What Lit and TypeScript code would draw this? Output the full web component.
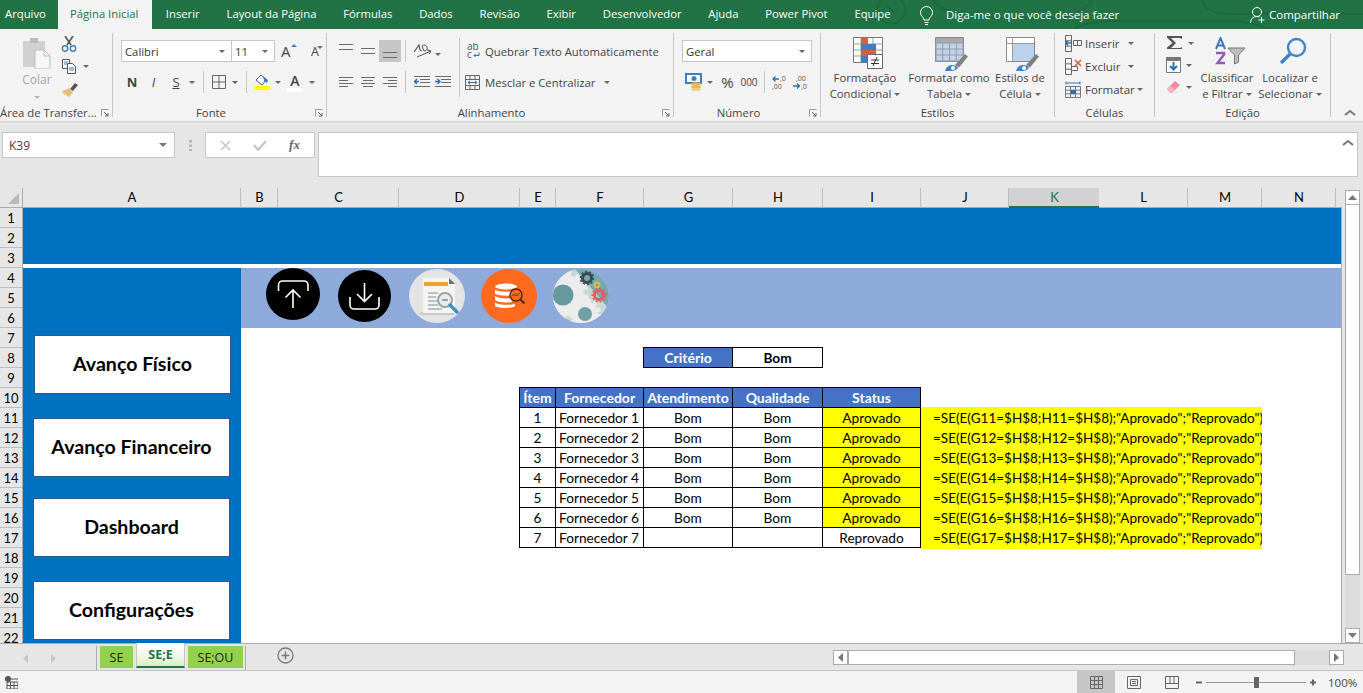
import { LitElement, html, svg, css } from "lit";
import { customElement } from "lit/decorators.js";

const UI_FONT = css`"Open Sans", "Noto Sans", sans-serif`;
const CELL_FONT = css`Lato, "Open Sans", sans-serif`;

// ------ helper for inline icons ------ //
const ico = (w: number, h: number, body: unknown) => html`<svg
  width=${w}
  height=${h}
  viewBox="0 0 ${w} ${h}"
  fill="none"
  style="display:block"
>${body}</svg>`;

const caret = html`<span class="caret"></span>`;
const launcher = html`<span class="launcher">${ico(8, 8, svg`
  <path d="M0.5 7.5V0.5H7.5" stroke="#9a9a9a"/><path d="M3 3L7 7M7 4V7H4" stroke="#666"/>`)}</span>`;

const lines = (rows: number[][], color = "#6a6a6a") =>
  rows.map(([x1, y, x2]) => svg`<path d="M${x1} ${y}.5H${x2}" stroke=${color}/>`);

const gridPath = (x: number, y: number, w: number, h: number, cols: number, rows: number, color: string) => {
  let d = "";
  for (let i = 0; i <= cols; i++) d += `M${x + (i * w) / cols} ${y}V${y + h}`;
  for (let i = 0; i <= rows; i++) d += `M${x} ${y + (i * h) / rows}H${x + w}`;
  return svg`<path d=${d} stroke=${color}/>`;
};

const brush = svg`
  <path d="M20 28l10-11 3 2.500-9 11z" fill="#808080"/>
  <path d="M10 34c1-4 4-6 7-6 3 0 5 1 6 3-3 3-8 4-13 3z" fill="#3c83c8"/>
  <circle cx="18" cy="31" r="2" fill="#fff"/>`;

const ICONS = {
  paste: ico(30, 32, svg`
    <path d="M1 4h22v26H1z" fill="#d3d0d0"/><path d="M8 1h8v5H8z" fill="#bdbaba"/>
    <path d="M13 13h9l6 6v13H13z" fill="#f7f7f7" stroke="#bdbdbd"/><path d="M22 13v6h6" stroke="#bdbdbd"/>`),
  cut: ico(16, 16, svg`
    <path d="M4 0l6 9M12 0L6 9" stroke="#555" stroke-width="1.600"/>
    <circle cx="4" cy="12.500" r="2.700" stroke="#3c7fc0" stroke-width="1.400"/>
    <circle cx="12" cy="12.500" r="2.700" stroke="#3c7fc0" stroke-width="1.400"/>`),
  copy: ico(16, 15, svg`
    <path d="M1.500.5h7v9h-7z" fill="#fff" stroke="#555"/><path d="M6.500 4.500h5l3 3v7h-8z" fill="#fff" stroke="#555"/>
    <path d="M3 3h4M3 5h3M8 9h5M8 11h5" stroke="#3c7fc0"/>`),
  painter: ico(17, 15, svg`
    <path d="M9 7l5-6 3 2-5 6z" fill="#555"/><path d="M1 9l8-3 3 4-4 5-2-1-1-2-2 1z" fill="#e7bd7f"/>`),
  borders: ico(14, 14, svg`<path d="M.5.5h13v13H.5zM7 .5v13M.5 7h13" stroke="#666"/>`),
  fill: ico(16, 13, svg`
    <path d="M2 6l5-5 5 5-4 5z" fill="#fff" stroke="#555"/><path d="M9 2l5 4-1 3-3-2z" fill="#3c7fc0"/>`),
  alignT: ico(14, 16, lines([[0, 1, 14], [0, 6, 14]])),
  alignM: ico(14, 16, lines([[0, 5, 14], [0, 10, 14]])),
  alignB: ico(14, 16, lines([[0, 9, 14], [0, 14, 14]])),
  left: ico(14, 11, lines([[0, 0, 14], [0, 3, 9], [0, 6, 14], [0, 9, 9]])),
  center: ico(14, 11, lines([[0, 0, 14], [2, 3, 12], [0, 6, 14], [2, 9, 12]])),
  right: ico(14, 11, lines([[0, 0, 14], [5, 3, 14], [0, 6, 14], [5, 9, 14]])),
  orient: ico(19, 16, svg`
    <path d="M1 9l5-7 1 5 1.500 1" stroke="#555" stroke-width="1.200"/><path d="M9 3a3 3 0 1 1 2 5z" stroke="#555"/>
    <path d="M4 14l14-6M14 7l4 1-2 3" stroke="#555"/>`),
  indentL: ico(16, 12, svg`${lines([[6, 3, 16], [6, 6, 16], [0, 0, 16], [0, 10, 16]])}
    <path d="M5 5.500H1M3 3L.5 5.500 3 8" stroke="#2b6fb5" stroke-width="1.400"/>`),
  indentR: ico(16, 12, svg`${lines([[6, 3, 16], [6, 6, 16], [0, 0, 16], [0, 10, 16]])}
    <path d="M0 5.500h4M2.500 3L5 5.500 2.500 8" stroke="#2b6fb5" stroke-width="1.400"/>`),
  merge: ico(15, 15, svg`
    <path d="M.5.5h14v14H.5zM.5 4.500h14M.5 10.500h14M5 .5v4M10 .5v4M5 10.500v4M10 10.500v4" stroke="#666"/>
    <path d="M3 7.500h9M5 5.800L3 7.500l2 1.700M10 5.800l2 1.700-2 1.700" stroke="#2b6fb5"/>`),
  wrapText: ico(16, 16, svg`
    <text x="2" y="7" font-size="10" fill="#555" font-family="Open Sans">ab</text>
    <text x="2" y="15" font-size="10" fill="#555" font-family="Open Sans">c</text>
    <path d="M14 9.500v3H9M10.500 11L9 12.500l1.500 1.500" stroke="#2b6fb5"/>`),
  money: ico(18, 18, svg`
    <path d="M1 1h15v9H1z" fill="#fff" stroke="#3c7fc0" stroke-width="2"/><circle cx="9" cy="5.500" r="2.500" fill="#3c7fc0"/>
    <ellipse cx="11" cy="11" rx="5" ry="1.800" fill="#e8b94a"/><ellipse cx="11" cy="14" rx="5" ry="1.800" fill="#e8b94a"/>
    <ellipse cx="11" cy="16.500" rx="5" ry="1.500" fill="#efcf88"/>`),
  incDec: ico(15, 15, svg`
    <path d="M7 4H1M3.500 1.500L1 4l2.500 2.500" stroke="#2b6fb5" stroke-width="1.300"/>
    <text x="8" y="6" font-size="7" fill="#555" font-family="Open Sans">,0</text>
    <text x="0" y="14" font-size="7" fill="#555" font-family="Open Sans">,00</text>`),
  decInc: ico(16, 15, svg`
    <text x="4" y="6" font-size="7" fill="#555" font-family="Open Sans">,00</text>
    <path d="M1 11h6M5 8.500L7.500 11 5 13.500" stroke="#2b6fb5" stroke-width="1.300"/>
    <text x="9" y="14" font-size="7" fill="#555" font-family="Open Sans">,0</text>`),
  condFmt: ico(30, 32, svg`
    <path d="M.5.5h29v25H.5z" fill="#fff" stroke="#777"/>
    <path d="M8 7h4v19M.5 7h29M.5 13h29M.5 19h29M8 .5v25M20 .5v25" stroke="#9a9a9a"/>
    <path d="M8 1h7v6H8zM8 13h15v6H8z" fill="#d9603b"/><path d="M8 7h15v6H8z" fill="#3f7fc1"/><path d="M8 19h6v7H8z" fill="#3f7fc1"/>
    <path d="M14.500 17.500h15v14h-15z" fill="#fff" stroke="#666"/>
    <path d="M18 23h8M18 26.500h8M24 20l-4 9" stroke="#333"/>`),
  tableFmt: ico(34, 34, svg`
    <path d="M.5.5h28v24H.5z" fill="#fff" stroke="#888"/><path d="M1 1h27v5H1z" fill="#a9a9a9"/>
    <path d="M1 6h27v18H1z" fill="#c3d1e6"/>${gridPath(1, 6, 27, 18, 4, 3, "#8f9cae")}${brush}`),
  cellFmt: ico(34, 34, svg`
    <path d="M.5.5h28v24H.5z" fill="#fff" stroke="#888"/>
    <path d="M6 6h22v18H6z" fill="#bcd2ea"/><path d="M.5 6.500h28M6.500 .5v24" stroke="#999"/>${brush}`),
  insert: ico(17, 17, svg`
    ${gridPath(.5, .5, 6, 16, 1, 3, "#666")}${gridPath(8.500, 5.500, 8, 5, 2, 1, "#666")}
    <path d="M7 8H1M3 5.500L.5 8 3 10.500" stroke="#2b6fb5" stroke-width="1.400"/>`),
  del: ico(17, 17, svg`
    ${gridPath(.5, .5, 6, 16, 1, 3, "#666")}${gridPath(6.500, 8.500, 6, 4, 1, 1, "#666")}
    <path d="M10 2l6 6M16 2l-6 6" stroke="#d9603b" stroke-width="1.600"/>`),
  format: ico(17, 17, svg`
    <path d="M1 2h14M1 .5v3M15 .5v3" stroke="#2b6fb5"/>
    ${gridPath(.5, 5.500, 15, 11, 3, 3, "#777")}<path d="M6 9h5v4H6z" fill="#2b6fb5"/>`),
  sigma: ico(17, 14, svg`<path d="M1 0h15v3l-2-1H5l5 5-5 5h9l2-1v2H1v-1.500L6.500 7 1 1.500z" fill="#555"/>`),
  fillDown: ico(15, 16, svg`
    <path d="M.5.5h14v15H.5z" fill="#fff" stroke="#777"/><path d="M1 1h13v3H1z" fill="#777"/>
    <path d="M7.500 5v7M4 9l3.500 3.500L11 9" stroke="#2b6fb5" stroke-width="2"/>`),
  eraser: ico(15, 14, svg`<path d="M1 9l8-8 5 4-8 8H4z" fill="#ef8b9d"/><path d="M1 9l3 4h2l3-3-4-4z" fill="#f4b7c2"/>`),
  sort: html`<svg width="32" height="30" viewBox="0 0 32 30" style="display:block">
    <path d="M14 11h17l-6.500 7v7l-4 2v-9z" fill="#bdbdbd" stroke="#777"/>
    <path d="M2 12L6.500 1 11 12M4 8.500h5" fill="none" stroke="#4078b8" stroke-width="2"/>
    <path d="M2 16h8v1.500L3.500 26H11" fill="none" stroke="#8e5cb8" stroke-width="2.400"/></svg>`,
  find: html`<svg width="28" height="28" viewBox="0 0 28 28" style="display:block">
    <circle cx="17.500" cy="10.500" r="8.500" fill="none" stroke="#3f83c7" stroke-width="2.400"/>
    <path d="M11 17L2 26" stroke="#3f83c7" stroke-width="3.400"/></svg>`,
};

@customElement("ribbon-bar")
export class RibbonBar extends LitElement {
  static styles = css`
    :host {
      display: block;
      font-family: ${UI_FONT};
      font-size: 11.3px;
      color: #444;
    }
    .title {
      height: 29px;
      background: #217346;
      display: flex;
      color: #fff;
      position: relative;
      overflow: hidden;
    }
    .deco {
      position: absolute;
      right: 0;
      top: 0;
    }
    .tab {
      padding: 0 13.4px;
      line-height: 28px;
      white-space: nowrap;
      position: relative;
    }
    .tab.file {
      padding: 0 12px 0 5px;
    }
    .tab.active {
      background: #f3f3f3;
      color: #217346;
      padding: 0 14px 0 12px;
    }
    .tell {
      position: absolute;
      left: 919px;
      top: 0;
      height: 29px;
      display: flex;
      align-items: center;
      gap: 12px;
      font-size: 11.5px;
    }
    .share {
      position: absolute;
      left: 1250px;
      top: 0;
      height: 29px;
      display: flex;
      align-items: center;
      gap: 4px;
      font-size: 11.5px;
    }
    .ribbon {
      height: 93px;
      box-sizing: border-box;
      background: #f3f3f3;
      border-bottom: 1px solid #d2d2d2;
      padding-top: 4px;
      display: flex;
      position: relative;
    }
    .group {
      height: 84px;
      flex: none;
      box-sizing: border-box;
      border-right: 1px solid #c6c6c6;
      position: relative;
    }
    .g-clip { width: 113px; }
    .g-font { width: 214px; }
    .g-align { width: 347px; }
    .g-num { width: 147px; }
    .g-style { width: 234px; }
    .g-cells { width: 100px; }
    .g-edit { width: 176px; }
    .body {
      height: 72px;
      display: flex;
    }
    .label {
      position: absolute;
      left: 0;
      right: 0;
      top: 72px;
      line-height: 16px;
      text-align: center;
      white-space: nowrap;
    }
    .label.pad {
      padding-right: 17px;
    }
    .label.clip {
      padding-right: 20px;
    }
    .launcher {
      position: absolute;
      right: 3px;
      top: 76px;
    }
    .caret {
      display: inline-block;
      flex: none;
      width: 0;
      height: 0;
      border-left: 3px solid transparent;
      border-right: 3px solid transparent;
      border-top: 3px solid #666;
    }
    .sep {
      width: 1px;
      height: 22px;
      background: #c6c6c6;
    }
    .paste {
      width: 48px;
      margin-left: 13px;
      padding-top: 4px;
      display: flex;
      flex-direction: column;
      align-items: center;
      color: #a6a6a6;
    }
    .paste span.txt {
      margin-top: 2px;
      line-height: 18px;
      font-size: 12px;
    }
    .paste .caret {
      margin-top: 7px;
      border-top-color: #b5b5b5;
    }
    .smalls {
      margin-top: -1px;
      display: grid;
      grid-auto-rows: 23px;
      align-items: center;
    }
    .smalls .caret {
      margin-left: 6px;
    }
    .line {
      display: flex;
      align-items: center;
    }
    .fontcol {
      margin-left: 8px;
      padding-top: 7px;
    }
    .select {
      box-sizing: border-box;
      height: 22px;
      background: #fff;
      border: 1px solid #c6c6c6;
      display: flex;
      align-items: center;
      justify-content: space-between;
      padding: 0 6px 0 3px;
      color: #333;
      font-size: 11.3px;
    }
    .s-font { width: 111px; }
    .s-size { width: 44px; margin-left: -1px; }
    .s-num { width: 130px; }
    .grow {
      margin-left: 6px;
      width: 24px;
      font-size: 15px;
      position: relative;
    }
    .shrink {
      font-size: 12.5px;
    }
    .grow i {
      position: absolute;
      top: 3px;
      right: 8px;
      width: 0;
      height: 0;
      border-left: 3px solid transparent;
      border-right: 3px solid transparent;
      border-bottom: 3px solid #3c7fc0;
    }
    .grow.shrink i {
      border-bottom: 0;
      border-top: 3px solid #3c7fc0;
      right: 12px;
    }
    .tools {
      display: grid;
      align-items: center;
      justify-items: center;
      height: 22px;
    }
    .t-font {
      margin-top: 9px;
      grid-template-columns: 22px 21px 24px 8px 14px 18px 14px 8px 24px 8px 26px 8px;
      font-size: 13px;
    }
    .t-font b { font-family: ${UI_FONT}; }
    .und {
      text-decoration: underline;
    }
    .swatch {
      display: flex;
      flex-direction: column;
      align-items: center;
    }
    .bar {
      width: 16px;
      height: 4px;
      margin-top: -1px;
      background: #ffff00;
    }
    .bar.white { background: #fff; margin-top: 0; }
    .letter {
      font-size: 14px;
      line-height: 15px;
      font-weight: 600;
    }
    .aligns {
      margin-left: 8px;
      padding-top: 7px;
      width: 124px;
      display: grid;
      grid-template-columns: 22px 22px 22px 8px 26px 16px;
      grid-template-rows: 22px 22px;
      row-gap: 9px;
      align-items: center;
      justify-items: center;
    }
    .on {
      background: #c6c6c6;
      width: 22px;
      height: 22px;
      display: flex;
      align-items: center;
      justify-content: center;
    }
    .start {
      justify-self: start;
    }
    .wrapcol {
      margin-top: 5px;
      height: 57px;
      padding-top: 2px;
      border-left: 1px solid #c6c6c6;
      display: grid;
      grid-template-rows: 22px 22px;
      row-gap: 9px;
      align-items: center;
    }
    .wrapline {
      display: flex;
      align-items: center;
      padding-left: 5px;
      font-size: 11.3px;
      white-space: nowrap;
    }
    .wrapline .ic {
      width: 20px;
      flex: none;
    }
    .wrapline .caret {
      margin-left: 9px;
    }
    .numcol {
      margin-left: 8px;
      padding-top: 7px;
    }
    .t-num {
      margin-top: 9px;
      grid-template-columns: 23px 10px 25px 18px 12px 18px 24px;
    }
    .pct {
      font-size: 15px;
    }
    .mil {
      font-size: 10px;
    }
    .big {
      padding-top: 4px;
      display: flex;
      flex-direction: column;
      align-items: center;
      text-align: center;
      flex: none;
      line-height: 16px;
      white-space: nowrap;
    }
    .big .pic {
      height: 30px;
      margin-bottom: 3px;
      margin-left: 5px;
    }
    .big .caret {
      margin-left: 3px;
      vertical-align: 2px;
    }
    .c1 { width: 78px; margin-left: 5px; }
    .c2 { width: 90px; }
    .c3 { width: 52px; }
    .c4 { width: 60px; }
    .c5 { width: 66px; }
    .celllist {
      margin: -1px 0 0 10px;
      display: grid;
      grid-auto-rows: 23px;
      align-items: center;
    }
    .celllist .name {
      min-width: 41px;
      margin: 0 2px 0 3px;
      font-size: 11.5px;
    }
    .editsmall {
      width: 31px;
      margin: -1px 0 0 11px;
      display: grid;
      grid-auto-rows: 22px;
      align-items: center;
    }
    .editsmall .caret {
      margin-left: 5px;
    }
    .collapse {
      position: absolute;
      left: 1344px;
      top: 80px;
    }
  `;

  render() {
    const tabs = ["Inserir", "Layout da Página", "Fórmulas", "Dados", "Revisão", "Exibir", "Desenvolvedor", "Ajuda", "Power Pivot", "Equipe"];
    return html`
      <div class="title">
        <svg class="deco" width="490" height="29" viewBox="0 0 490 29" fill="none" stroke="#1c6a3e" stroke-width="2">
          <circle cx="18" cy="10" r="14"/><path d="M12 4l10 10M60 0c10 12 30 18 60 18h60c20 0 30-8 40-18M200 29c20-10 40-8 70-8h90c20 0 30 8 40 8M330 0c0 10 10 14 30 14h130"/>
        </svg>
        <div class="tab file">Arquivo</div>
        <div class="tab active">Página Inicial</div>
        ${tabs.map((t) => html`<div class="tab">${t}</div>`)}
        <div class="tell">
          ${ico(15, 20, svg`<path d="M4 12.500C2.500 11 1.500 9.500 1.500 7.500a6 6 0 0 1 12 0c0 2-1 3.500-2.500 5-.6.7-1 1.500-1 2.500H5c0-1-.4-1.800-1-2.500zM5.500 17.500h4M6 19.500h3" stroke="#fff"/>`)}
          <span>Diga-me o que você deseja fazer</span>
        </div>
        <div class="share">
          ${ico(15, 18, svg`<circle cx="7" cy="6" r="4.500" stroke="#fff"/><path d="M.5 17c0-4 2.500-6.500 6.500-6.500 1 0 2 .2 2.500.5M11.500 11v6M8.500 14h6" stroke="#fff"/>`)}
          <span>Compartilhar</span>
        </div>
      </div>

      <div class="ribbon">
        <section class="group g-clip">
          <div class="body">
            <div class="paste">${ICONS.paste}<span class="txt">Colar</span>${caret}</div>
            <div class="smalls">
              <div class="line">${ICONS.cut}</div>
              <div class="line">${ICONS.copy}${caret}</div>
              <div class="line">${ICONS.painter}</div>
            </div>
          </div>
          <div class="label clip">Área de Transfer...</div>
          ${launcher}
        </section>

        <section class="group g-font">
          <div class="body">
            <div class="fontcol">
              <div class="line">
                <div class="select s-font">Calibri${caret}</div>
                <div class="select s-size">11${caret}</div>
                <div class="grow">A<i></i></div>
                <div class="grow shrink">A<i></i></div>
              </div>
              <div class="tools t-font">
                <b>N</b><i>I</i><span class="und">S</span>${caret}<span class="sep"></span>
                ${ICONS.borders}${caret}<span class="sep"></span>
                <span class="swatch">${ICONS.fill}<span class="bar"></span></span>${caret}
                <span class="swatch"><span class="letter">A</span><span class="bar white"></span></span>${caret}
              </div>
            </div>
          </div>
          <div class="label pad">Fonte</div>
          ${launcher}
        </section>

        <section class="group g-align">
          <div class="body">
            <div class="aligns">
              ${ICONS.alignT}${ICONS.alignM}<span class="on">${ICONS.alignB}</span><span class="sep"></span>
              ${ICONS.orient}<span class="start">${caret}</span>
              ${ICONS.left}${ICONS.center}${ICONS.right}<span class="sep"></span>${ICONS.indentL}${ICONS.indentR}
            </div>
            <div class="wrapcol">
              <div class="wrapline"><span class="ic">${ICONS.wrapText}</span>Quebrar Texto Automaticamente</div>
              <div class="wrapline"><span class="ic">${ICONS.merge}</span>Mesclar e Centralizar${caret}</div>
            </div>
          </div>
          <div class="label pad">Alinhamento</div>
          ${launcher}
        </section>

        <section class="group g-num">
          <div class="body">
            <div class="numcol">
              <div class="select s-num">Geral${caret}</div>
              <div class="tools t-num">
                ${ICONS.money}${caret}<span class="pct">%</span><span class="mil">000</span><span class="sep"></span>
                ${ICONS.incDec}${ICONS.decInc}
              </div>
            </div>
          </div>
          <div class="label pad">Número</div>
          ${launcher}
        </section>

        <section class="group g-style">
          <div class="body">
            <div class="big c1"><div class="pic">${ICONS.condFmt}</div><div>Formatação<br />Condicional${caret}</div></div>
            <div class="big c2"><div class="pic">${ICONS.tableFmt}</div><div>Formatar como<br />Tabela${caret}</div></div>
            <div class="big c3"><div class="pic">${ICONS.cellFmt}</div><div>Estilos de<br />Célula${caret}</div></div>
          </div>
          <div class="label">Estilos</div>
        </section>

        <section class="group g-cells">
          <div class="body">
            <div class="celllist">
              <div class="line">${ICONS.insert}<span class="name">Inserir</span>${caret}</div>
              <div class="line">${ICONS.del}<span class="name">Excluir</span>${caret}</div>
              <div class="line">${ICONS.format}<span class="name">Formatar</span>${caret}</div>
            </div>
          </div>
          <div class="label">Células</div>
        </section>

        <section class="group g-edit">
          <div class="body">
            <div class="editsmall">
              <div class="line">${ICONS.sigma}${caret}</div>
              <div class="line">${ICONS.fillDown}${caret}</div>
              <div class="line">${ICONS.eraser}${caret}</div>
            </div>
            <div class="big c4"><div class="pic">${ICONS.sort}</div><div>Classificar<br />e Filtrar${caret}</div></div>
            <div class="big c5"><div class="pic">${ICONS.find}</div><div>Localizar e<br />Selecionar${caret}</div></div>
          </div>
          <div class="label">Edição</div>
        </section>

        <div class="collapse">${ico(12, 8, svg`<path d="M1 6l5-4 5 4" stroke="#777" stroke-width="2"/>`)}</div>
      </div>
    `;
  }
}

@customElement("formula-bar")
export class FormulaBar extends LitElement {
  static styles = css`
    :host {
      display: flex;
      height: 66px;
      box-sizing: border-box;
      background: #e6e6e6;
      padding: 10px 5px 0 2px;
      font-family: ${UI_FONT};
    }
    .box {
      box-sizing: border-box;
      background: #fff;
      border: 1px solid #c6c6c6;
      height: 26px;
      display: flex;
      align-items: center;
    }
    .name {
      width: 173px;
      padding: 0 7px 0 6px;
      justify-content: space-between;
      font-size: 12px;
      color: #444;
    }
    .caret {
      width: 0;
      height: 0;
      border-left: 4px solid transparent;
      border-right: 4px solid transparent;
      border-top: 4px solid #777;
    }
    .grip {
      width: 30px;
      height: 26px;
      display: flex;
      align-items: center;
      justify-content: center;
    }
    .fx {
      width: 110px;
      justify-content: space-around;
      padding: 0 3px;
    }
    .fxtext {
      font-family: "Liberation Serif", serif;
      font-style: italic;
      font-weight: bold;
      font-size: 13px;
      color: #666;
    }
    .input {
      flex: 1;
      height: 45px;
      margin-left: 3px;
      box-sizing: border-box;
      background: #fff;
      border: 1px solid #c6c6c6;
      display: flex;
      justify-content: flex-end;
      padding: 6px 3px 0 0;
    }
  `;

  render() {
    return html`
      <div class="box name"><span>K39</span><span class="caret"></span></div>
      <div class="grip">${ico(3, 11, svg`<path d="M0 0h3v2.500H0zM0 4.500h3V7H0zM0 9h3v2H0z" fill="#b5b5b5"/>`)}</div>
      <div class="box fx">
        ${ico(11, 11, svg`<path d="M1 1l9 9M10 1l-9 9" stroke="#c6c6c6" stroke-width="1.600"/>`)}
        ${ico(14, 11, svg`<path d="M1 5l4 5 8-9" stroke="#c6c6c6" stroke-width="2.200"/>`)}
        <span class="fxtext">fx</span>
      </div>
      <div class="input">${ico(12, 8, svg`<path d="M1 6l5-4 5 4" stroke="#777" stroke-width="2"/>`)}</div>
    `;
  }
}

@customElement("sheet-view")
export class SheetView extends LitElement {
  static styles = css`
    :host {
      display: flex;
      height: 456px;
      box-sizing: border-box;
      background: #e6e6e6;
      border-bottom: 1px solid #ababab;
      font-family: ${CELL_FONT};
      color: #000;
    }
    .main {
      width: 1342px;
      flex: none;
      box-sizing: border-box;
      overflow: hidden;
    }
    .heads {
      height: 20px;
      display: flex;
      box-sizing: border-box;
      border-bottom: 1px solid #ababab;
    }
    .corner {
      width: 23px;
      box-sizing: border-box;
      border-right: 1px solid #ababab;
      padding: 5px 0 0 8px;
    }
    .cols {
      flex: 1;
      display: grid;
      grid-template-columns: 218px 37px 121px 121px 36px 88px 89px 90px 98px 88px 90px 89px 74px 74px;
    }
    .col {
      border-right: 1px solid #bdbdbd;
      padding-left: 1px;
      text-align: center;
      font-size: 13px;
      line-height: 19px;
      box-sizing: border-box;
    }
    .col.cur {
      background: #d2d2d2;
      color: #217346;
      border-bottom: 2px solid #217346;
      border-right: 0;
      height: 20px;
    }
    .area {
      display: flex;
      height: 435px;
    }
    .rows {
      width: 23px;
      flex: none;
      height: 435px;
      overflow: hidden;
      box-sizing: border-box;
      border-right: 1px solid #ababab;
    }
    .rownum {
      height: 20px;
      box-sizing: border-box;
      border-bottom: 1px solid #bdbdbd;
      text-align: center;
      font-size: 13px;
      line-height: 21px;
    }
    .cells {
      flex: 1;
      background: #fff;
      height: 435px;
      overflow: hidden;
      display: grid;
      grid-template-columns: 218px 37px 121px 121px 36px 88px 89px 90px 98px 88px 90px 89px 74px 74px 5px;
      grid-template-rows: repeat(22, 20px);
      border-right: 1px solid #ababab;
    }
    .banner {
      grid-column: 1 / -1;
      grid-row: 1 / 4;
      height: 56px;
      background: #0070c0;
    }
    .side {
      grid-column: 1;
      grid-row: 4 / 23;
      background: #0070c0;
      padding-top: 67px;
      display: flex;
      flex-direction: column;
      margin-bottom: -5px;
    }
    .navbtn {
      box-sizing: border-box;
      width: 197px;
      height: 59px;
      margin-left: 10px;
      padding-bottom: 2px;
      background: #fff;
      border: 1px solid #2f5597;
      display: flex;
      align-items: center;
      justify-content: center;
      font-size: 19.6px;
      font-weight: 700;
      flex: none;
    }
    .navbtn.first { margin-left: 11px; margin-bottom: 24px; }
    .navbtn.second { margin-bottom: 21px; }
    .navbtn.third { margin-bottom: 24px; }
    .band {
      grid-column: 2 / -1;
      grid-row: 4 / 7;
      background: #8eaadb;
      display: flex;
      align-items: flex-start;
    }
    .band svg {
      display: block;
      flex: none;
    }
    .i1 { margin-left: 25px; }
    .i2 { margin: 2px 0 0 18px; }
    .i3 { margin: 1px 0 0 18px; }
    .i4 { margin: 1px 0 0 16px; }
    .i5 { margin: 1px 0 0 16px; }
    .crit {
      grid-column: 7 / 9;
      grid-row: 8;
      margin: -1px 0 0 -1px;
      height: 21px;
      display: grid;
      grid-template-columns: 90px 90px;
    }
    .table {
      grid-column: 5 / 10;
      grid-row: 10 / 18;
      margin: -1px 0 0 -1px;
      display: grid;
      grid-template-columns: 36px 88px 89px 90px 98px;
      grid-auto-rows: 20px;
      border-top: 1px solid #000;
      border-left: 1px solid #000;
      box-sizing: border-box;
      height: 161px;
      width: 402px;
    }
    .c {
      box-sizing: border-box;
      border-right: 1px solid #000;
      border-bottom: 1px solid #000;
      text-align: center;
      font-size: 13.7px;
      line-height: 20px;
      white-space: nowrap;
      overflow: hidden;
    }
    .c.l {
      text-align: left;
      padding-left: 3px;
    }
    .c.h {
      background: #4472c4;
      color: #fff;
      font-weight: 700;
      font-size: 14px;
    }
    .c.ok {
      background: #ffff00;
    }
    .crit .c {
      border-top: 1px solid #000;
      font-weight: 700;
    }
    .crit .c.h {
      border-left: 1px solid #000;
      color: #fff;
    }
    .formulas {
      grid-column: 10 / 14;
      grid-row: 11 / 18;
      margin-top: -1px;
      height: 141px;
      background: #ffff00;
      padding: 1px 0 0 12px;
      font-size: 13.5px;
      line-height: 20px;
      white-space: nowrap;
      overflow: hidden;
    }
    .vscroll {
      margin-left: 3px;
      width: 15px;
      padding-top: 2px;
      display: flex;
      flex-direction: column;
      height: 455px;
      box-sizing: border-box;
    }
    .btn {
      height: 15px;
      box-sizing: border-box;
      border: 1px solid #ababab;
      background: #fff;
      display: flex;
      align-items: center;
      justify-content: center;
      flex: none;
    }
    .thumb {
      height: 370px;
      box-sizing: border-box;
      border: 1px solid #ababab;
      border-top: 0;
      background: #fff;
      flex: none;
    }
    .track {
      flex: 1;
      background: #dcdcdc;
    }
  `;

  render() {
    const cols = "ABCDEFGHIJKLMN".split("");
    const rows = Array.from({ length: 22 }, (_, i) => i + 1);
    const items = [1, 2, 3, 4, 5, 6, 7];
    return html`
      <div class="main">
        <div class="heads">
          <div class="corner">${ico(11, 11, svg`<path d="M11 0v11H0z" fill="#b9b9b9"/>`)}</div>
          <div class="cols">
            ${cols.map((c) => html`<div class="col ${c === "K" ? "cur" : ""}">${c}</div>`)}
          </div>
        </div>
        <div class="area">
          <div class="rows">${rows.map((r) => html`<div class="rownum">${r}</div>`)}</div>
          <div class="cells">
            <div class="banner"></div>
            <div class="side">
              <div class="navbtn first">Avanço Físico</div>
              <div class="navbtn second">Avanço Financeiro</div>
              <div class="navbtn third">Dashboard</div>
              <div class="navbtn">Configurações</div>
            </div>
            <div class="band">
              <svg class="i1" width="54" height="52" viewBox="0 0 54 52" fill="none" stroke="#fff" stroke-width="1.600">
                <ellipse cx="27" cy="26" rx="27" ry="26" fill="#000" stroke="none"/>
                <path d="M12.500 23v-6a4 4 0 0 1 4-4H38a4 4 0 0 1 4 4v6M27 22v18M19.500 29.500L27 22l7.500 7.500"/>
              </svg>
              <svg class="i2" width="53" height="52" viewBox="0 0 53 52" fill="none" stroke="#fff" stroke-width="1.600">
                <ellipse cx="26.500" cy="26" rx="26.500" ry="26" fill="#000" stroke="none"/>
                <path d="M12 27v8a4 4 0 0 0 4 4h21a4 4 0 0 0 4-4v-8M26.500 13v18M19 24l7.500 7.500L34 24"/>
              </svg>
              <svg class="i3" width="56" height="54" viewBox="0 0 56 54">
                <ellipse cx="28" cy="27" rx="28" ry="27" fill="#e4e4e4"/>
                <path d="M12 43h32l2 3H10z" fill="#c9c9c9"/>
                <path d="M14 9h26l6 6v29H14z" fill="#f6f4ee"/><path d="M40 9l6 6h-6z" fill="#6d6d6d"/>
                <path d="M15 13h24v4H15z" fill="#eda332"/>
                <path d="M19 24h10M19 28h8M19 32h12M19 36h10M19 40h14" stroke="#9fb2bd" stroke-width="1.400"/>
                <circle cx="36" cy="31" r="7" fill="#e8eef0" stroke="#9ca3a6" stroke-width="2"/>
                <path d="M33 31h6" stroke="#888" stroke-width="1.500"/>
                <path d="M41 36l7 7" stroke="#3d8fc4" stroke-width="3.500" stroke-linecap="round"/>
              </svg>
              <svg class="i4" width="56" height="54" viewBox="0 0 56 54">
                <ellipse cx="28" cy="27" rx="28" ry="27" fill="#fe6a1f"/>
                <g fill="#fff">
                  <ellipse cx="25" cy="17.500" rx="11" ry="3"/>
                  <path d="M14 20.500c3 3 19 3 22 0v4c-3 3-19 3-22 0z"/>
                  <path d="M14 27c3 2.500 12 3 16 2l1 4c-5 1-14 .5-17-2z"/>
                  <path d="M14 33.500c3 2.500 15 3 20 1.500v2c-3 2.500-17 2.500-20 0z"/>
                </g>
                <circle cx="35" cy="26" r="6" fill="#fe6a1f" stroke="#4a2a18" stroke-width="1.400"/>
                <path d="M31.500 27l2-2 2 2 3-3" stroke="#4a2a18" fill="none"/>
                <path d="M39.500 30.500l4 4" stroke="#4a2a18" stroke-width="2"/>
              </svg>
              <svg class="i5" width="56" height="54" viewBox="0 0 56 54">
                <defs><clipPath id="gearclip"><ellipse cx="28" cy="27" rx="28" ry="27"/></clipPath></defs>
                <g clip-path="url(#gearclip)">
                  <rect width="56" height="54" fill="#c9d8d6"/>
                  <path d="M0 0h56v40L22 0z" fill="#74aaaf"/>
                  <circle cx="10" cy="26" r="21" fill="#ececec"/>
                  <circle cx="10" cy="26" r="23" fill="none" stroke="#ececec" stroke-width="5" stroke-dasharray="6 5"/>
                  <circle cx="10" cy="26" r="10.500" fill="#66989e"/>
                  <circle cx="32" cy="45" r="13" fill="#ececec"/>
                  <circle cx="32" cy="45" r="14.500" fill="none" stroke="#ececec" stroke-width="3" stroke-dasharray="4 3"/>
                  <circle cx="32" cy="45" r="7" fill="#6fa0a6"/>
                  <circle cx="34" cy="9" r="4.500" fill="none" stroke="#3c4a52" stroke-width="3"/>
                  <circle cx="34" cy="9" r="6.500" fill="none" stroke="#3c4a52" stroke-width="1.500" stroke-dasharray="2 2"/>
                  <circle cx="44" cy="16" r="2.500" fill="none" stroke="#e8b93e" stroke-width="1.800"/>
                  <circle cx="46" cy="26" r="4.500" fill="none" stroke="#dd5d5d" stroke-width="3"/>
                  <circle cx="46" cy="26" r="6.800" fill="none" stroke="#dd5d5d" stroke-width="1.500" stroke-dasharray="2 2"/>
                </g>
              </svg>
            </div>
            <div class="crit">
              <div class="c h">Critério</div>
              <div class="c">Bom</div>
            </div>
            <div class="table">
              ${["Ítem", "Fornecedor", "Atendimento", "Qualidade", "Status"].map((h) => html`<div class="c h">${h}</div>`)}
              ${items.map((n) => {
                const ok = n < 7;
                return html`
                  <div class="c">${n}</div>
                  <div class="c l">Fornecedor ${n}</div>
                  <div class="c">${ok ? "Bom" : ""}</div>
                  <div class="c">${ok ? "Bom" : ""}</div>
                  <div class="c ${ok ? "ok" : ""}">${ok ? "Aprovado" : "Reprovado"}</div>
                `;
              })}
            </div>
            <div class="formulas">
              ${items.map((n) => html`<div>=SE(E(G${n + 10}=$H$8;H${n + 10}=$H$8);"Aprovado";"Reprovado")</div>`)}
            </div>
          </div>
        </div>
      </div>
      <div class="vscroll">
        <div class="btn">${ico(9, 5, svg`<path d="M0 5L4.500 0 9 5z" fill="#777"/>`)}</div>
        <div class="thumb"></div>
        <div class="track"></div>
        <div class="btn">${ico(9, 5, svg`<path d="M0 0L4.500 5 9 0z" fill="#777"/>`)}</div>
      </div>
    `;
  }
}

@customElement("sheet-footer")
export class SheetFooter extends LitElement {
  static styles = css`
    :host {
      display: block;
      font-family: ${UI_FONT};
      font-size: 12px;
      color: #333;
    }
    .tabsbar {
      height: 27px;
      box-sizing: border-box;
      background: #e6e6e6;
      border-bottom: 1px solid #c6c6c6;
      display: flex;
      align-items: flex-start;
    }
    .nav {
      width: 97px;
      height: 24px;
      box-sizing: border-box;
      padding: 8px 0 0 23px;
      display: flex;
      gap: 23px;
      border-right: 1px solid #ababab;
      margin-top: 2px;
      flex: none;
    }
    .sheet {
      height: 22px;
      margin: 2px 0 0 3px;
      background: #92d050;
      display: flex;
      align-items: center;
      justify-content: center;
      flex: none;
      color: #222;
      font-size: 12.5px;
    }
    .s1 { width: 33px; }
    .s2 {
      width: 49px;
      height: 25px;
      margin-top: -1px;
      box-sizing: border-box;
      background: linear-gradient(#fff 20%, #dcefc7);
      border: 1px solid #c6c6c6;
      border-top: 0;
      border-bottom: 2px solid #217346;
      color: #217346;
      font-weight: 700;
    }
    .s3 { width: 55px; }
    .end {
      width: 1px;
      height: 24px;
      margin: 2px 0 0 2px;
      background: #ababab;
      flex: none;
    }
    .plus {
      margin: 3px 0 0 31px;
      flex: none;
    }
    .hscroll {
      margin: 6px 0 0 539px;
      display: flex;
      width: 511px;
      height: 15px;
      flex: none;
    }
    .hb {
      width: 15px;
      box-sizing: border-box;
      border: 1px solid #ababab;
      background: #fff;
      display: flex;
      align-items: center;
      justify-content: center;
      flex: none;
    }
    .hthumb {
      width: 447px;
      box-sizing: border-box;
      border: 1px solid #ababab;
      background: #fff;
      flex: none;
    }
    .htrack {
      width: 34px;
      background: #dcdcdc;
      flex: none;
    }
    .status {
      height: 22px;
      background: #f3f3f3;
      display: flex;
      align-items: center;
      padding-left: 5px;
    }
    .views {
      margin-left: 1059px;
      display: grid;
      grid-template-columns: 38px 38px 38px;
      height: 22px;
      align-items: center;
      justify-items: center;
      flex: none;
    }
    .view-on {
      background: #c6c6c6;
      width: 38px;
      height: 22px;
      display: flex;
      align-items: center;
      justify-content: center;
    }
    .zoom {
      margin-left: 5px;
      display: flex;
      align-items: center;
      flex: none;
    }
    .pct {
      margin-left: 10px;
      font-size: 11.5px;
      color: #444;
    }
  `;

  render() {
    return html`
      <div class="tabsbar">
        <div class="nav">
          ${ico(5, 9, svg`<path d="M5 0v9L0 4.500z" fill="#c6c6c6"/>`)}
          ${ico(5, 9, svg`<path d="M0 0v9l5-4.500z" fill="#c6c6c6"/>`)}
        </div>
        <div class="sheet s1">SE</div>
        <div class="sheet s2">SE;E</div>
        <div class="sheet s3">SE;OU</div>
        <div class="end"></div>
        <div class="plus">${ico(17, 17, svg`<circle cx="8.500" cy="8.500" r="7.500" stroke="#7a7a7a" stroke-width="1.300"/><path d="M4.500 8.500h8M8.500 4.500v8" stroke="#7a7a7a" stroke-width="1.500"/>`)}</div>
        <div class="hscroll">
          <div class="hb">${ico(5, 9, svg`<path d="M5 0v9L0 4.500z" fill="#777"/>`)}</div>
          <div class="hthumb"></div>
          <div class="htrack"></div>
          <div class="hb">${ico(5, 9, svg`<path d="M0 0v9l5-4.500z" fill="#777"/>`)}</div>
        </div>
      </div>
      <div class="status">
        ${ico(13, 13, svg`<circle cx="3" cy="3" r="3" fill="#555"/><path d="M6 3h7M2 6h11v7H2zM5.500 6v7M9 6v7M2 9.500h11" stroke="#555"/>`)}
        <div class="views">
          <span class="view-on">${ico(13, 13, svg`<path d="M.5.500h12v12H.5zM4.500.500v12M8.500.500v12M.5 4.500h12M.5 8.500h12" stroke="#666"/>`)}</span>
          ${ico(14, 13, svg`<path d="M.5.500h13v12H.5z" stroke="#666"/><path d="M3.500 3.500h7v6h-7zM5 5.500h4M5 7.500h4" stroke="#666"/>`)}
          ${ico(14, 13, svg`<path d="M.5.500h13v12H.5zM.5 7.500h13M5 .500v7M9 .500v7" stroke="#666"/>`)}
        </div>
        <div class="zoom">
          ${ico(122, 13, svg`
            <path d="M0 5.500h6v2H0z" fill="#666"/><path d="M10 6.500h100" stroke="#9a9a9a"/>
            <path d="M58 1h5v11h-5z" fill="#666"/>
            <path d="M114 6.500h6M117 3.500v6" stroke="#666" stroke-width="2"/>`)}
        </div>
        <span class="pct">100%</span>
      </div>
    `;
  }
}

@customElement("app-root")
export class AppRoot extends LitElement {
  static styles = css`
    :host {
      display: block;
      width: 1363px;
      height: 693px;
      overflow: hidden;
    }
  `;

  render() {
    return html`
      <ribbon-bar></ribbon-bar>
      <formula-bar></formula-bar>
      <sheet-view></sheet-view>
      <sheet-footer></sheet-footer>
    `;
  }
}
